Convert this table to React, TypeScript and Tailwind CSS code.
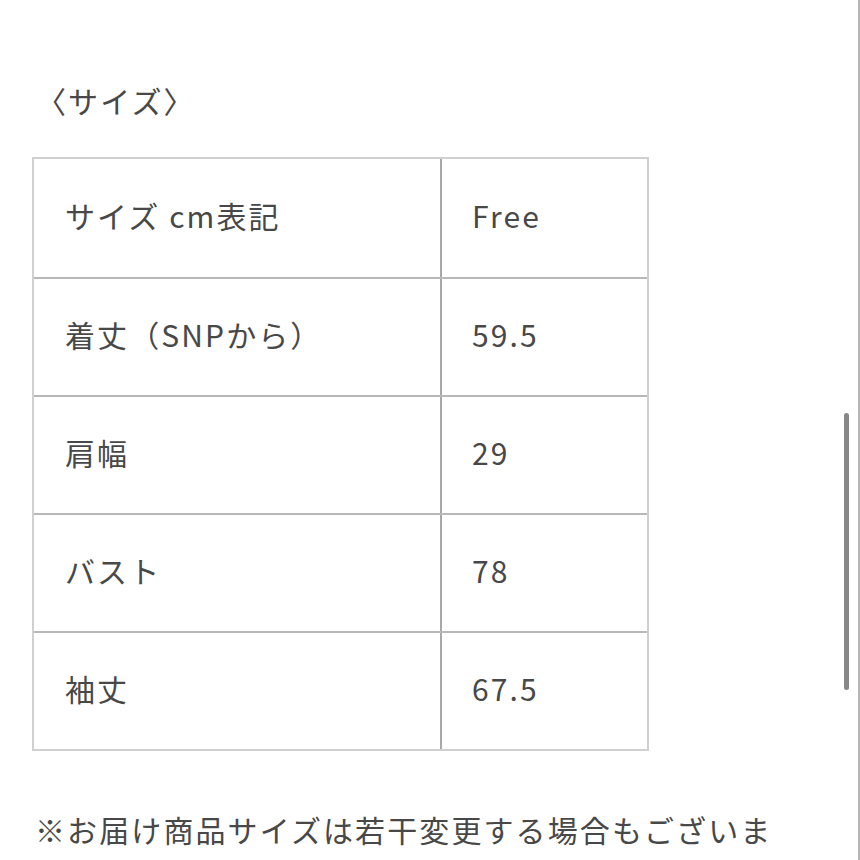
const rows: [string, string][] = [
  ["サイズ cm表記", "Free"],
  ["着丈（SNPから）", "59.5"],
  ["肩幅", "29"],
  ["バスト", "78"],
  ["袖丈", "67.5"],
];

const font = { fontFamily: '"Noto Sans CJK JP", "Noto Sans", sans-serif' };

export default function App() {
  return (
    <div
      className="relative h-[860px] w-[860px] overflow-hidden border-r-2 border-[#b5b5b5] bg-white text-[30px] tracking-[0.07em] text-[#484848]"
      style={font}
    >
      <div className="h-[4px] overflow-hidden pl-[40px]">
        <p className="-mt-[38px] leading-[40px]">ます。</p>
      </div>
      <p className="mt-[74px] pl-[36px] leading-[44px]">〈サイズ〉</p>

      <div className="mt-[35px] ml-[32px] w-[617px] border-2 border-[#d0d0d0]">
        {rows.map(([label, value], i) => (
          <div key={label} className={`flex h-[118px] ${i > 0 ? "border-t-2 border-[#b8b8b8]" : ""}`}>
            <div className="flex w-[408px] items-center border-r-2 border-[#a8a8a8] pb-[6px] pl-[31px]">{label}</div>
            <div className="flex flex-1 items-center pb-[6px] pl-[30px]">{value}</div>
          </div>
        ))}
      </div>

      <p className="mt-[56px] pl-[35px] leading-[44px] whitespace-nowrap">※お届け商品サイズは若干変更する場合もございま</p>

      <div className="absolute top-[413px] right-[9px] h-[277px] w-[5px] rounded-full bg-[#888]" />
    </div>
  );
}
